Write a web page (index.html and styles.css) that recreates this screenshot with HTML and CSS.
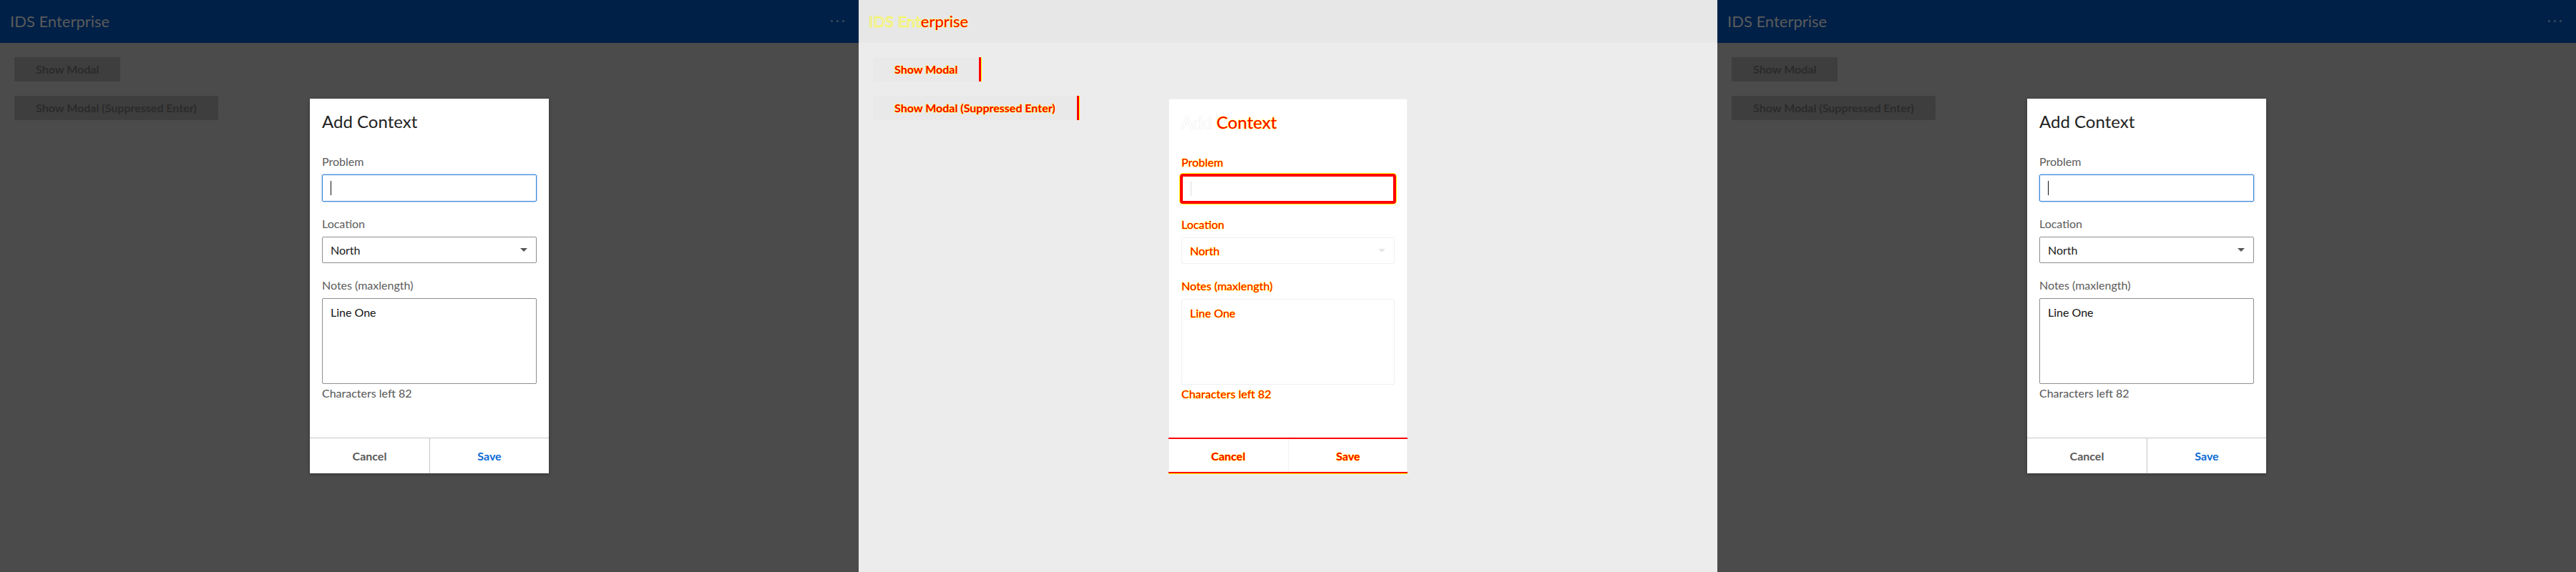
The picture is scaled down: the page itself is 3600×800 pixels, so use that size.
FILE: index.html
```html
<!DOCTYPE html>
<html lang="en">
<head>
<meta charset="utf-8">
<title>IDS Enterprise – Modal</title>
<link rel="stylesheet" href="styles.css">
</head>
<body>
  <!-- Left: actual -->
  <section class="panel panel-dim">
    <header class="hdr">
      <span class="hdr-title">IDS Enterprise</span>
      <span class="dots"><i></i><i></i><i></i></span>
    </header>
    <div class="content">
      <button class="btn">Show Modal</button>
      <button class="btn">Show Modal (Suppressed Enter)</button>
    </div>
    <div class="modal">
      <div class="modal-body">
        <h2 class="modal-title">Add Context</h2>
        <div class="field">
          <label class="lbl">Problem</label>
          <div class="input input-focus"><span class="caret"></span></div>
        </div>
        <div class="field">
          <label class="lbl">Location</label>
          <div class="input select"><span>North</span><svg class="arrow" width="10" height="5" viewBox="0 0 10 5"><path d="M0 0h10L5 5z"/></svg></div>
        </div>
        <div class="field field-last">
          <label class="lbl">Notes (maxlength)</label>
          <div class="input textarea">Line One</div>
        </div>
        <div class="counter">Characters left 82</div>
      </div>
      <div class="modal-foot">
        <button class="fbtn">Cancel</button>
        <button class="fbtn fbtn-primary">Save</button>
      </div>
    </div>
  </section>

  <!-- Middle: diff -->
  <section class="panel panel-diff">
    <header class="hdr">
      <span class="hdr-title"><span class="ghost">IDS Ent</span>erprise</span>
    </header>
    <div class="content">
      <button class="btn">Show Modal</button>
      <button class="btn">Show Modal (Suppressed Enter)</button>
    </div>
    <div class="modal">
      <div class="modal-body">
        <h2 class="modal-title"><span class="faint">Add</span> Context</h2>
        <div class="field">
          <label class="lbl">Problem</label>
          <div class="input input-focus"><span class="caret"></span></div>
        </div>
        <div class="field">
          <label class="lbl">Location</label>
          <div class="input select"><span>North</span><svg class="arrow" width="10" height="5" viewBox="0 0 10 5"><path d="M0 0h10L5 5z"/></svg></div>
        </div>
        <div class="field field-last">
          <label class="lbl">Notes (maxlength)</label>
          <div class="input textarea">Line One</div>
        </div>
        <div class="counter">Characters left 82</div>
      </div>
      <div class="modal-foot">
        <button class="fbtn">Cancel</button>
        <button class="fbtn fbtn-primary">Save</button>
      </div>
    </div>
  </section>

  <!-- Right: expected -->
  <section class="panel panel-dim">
    <header class="hdr">
      <span class="hdr-title">IDS Enterprise</span>
      <span class="dots"><i></i><i></i><i></i></span>
    </header>
    <div class="content">
      <button class="btn">Show Modal</button>
      <button class="btn">Show Modal (Suppressed Enter)</button>
    </div>
    <div class="modal">
      <div class="modal-body">
        <h2 class="modal-title">Add Context</h2>
        <div class="field">
          <label class="lbl">Problem</label>
          <div class="input input-focus"><span class="caret"></span></div>
        </div>
        <div class="field">
          <label class="lbl">Location</label>
          <div class="input select"><span>North</span><svg class="arrow" width="10" height="5" viewBox="0 0 10 5"><path d="M0 0h10L5 5z"/></svg></div>
        </div>
        <div class="field field-last">
          <label class="lbl">Notes (maxlength)</label>
          <div class="input textarea">Line One</div>
        </div>
        <div class="counter">Characters left 82</div>
      </div>
      <div class="modal-foot">
        <button class="fbtn">Cancel</button>
        <button class="fbtn fbtn-primary">Save</button>
      </div>
    </div>
  </section>
</body>
</html>
```

FILE: styles.css
```css
* { box-sizing: border-box; }

html, body {
  margin: 0;
  padding: 0;
}

body {
  display: flex;
  width: 3600px;
  height: 800px;
  overflow: hidden;
  font-family: Lato, "Noto Sans", "Liberation Sans", sans-serif;
  font-size: 16px;
}

.panel {
  position: relative;
  width: 1200px;
  height: 800px;
  flex: none;
  display: flex;
  flex-direction: column;
  overflow: hidden;
}

/* ---------- header ---------- */
.hdr {
  height: 60px;
  flex: none;
  display: flex;
  align-items: center;
  justify-content: space-between;
  padding: 0 20px 0 14px;
}

.hdr-title {
  font-size: 22px;
  line-height: 28px;
}

.dots {
  display: flex;
  gap: 5px;
  margin-top: -2px;
}

.dots i {
  display: block;
  width: 3px;
  height: 3px;
  border-radius: 50%;
}

/* ---------- page content ---------- */
.content {
  flex: 1;
  padding: 20px;
  display: flex;
  flex-direction: column;
  align-items: flex-start;
  gap: 20px;
}

.btn {
  height: 34px;
  padding: 0 30px;
  border: 0;
  border-radius: 2px;
  font-family: inherit;
  font-size: 16px;
  font-weight: 700;
  line-height: 20px;
  white-space: nowrap;
}

/* ---------- modal ---------- */
.modal {
  position: absolute;
  left: 50%;
  top: 50%;
  width: 334px;
  height: 524px;
  transform: translate(-50%, -50%);
  background: #fff;
  display: flex;
  flex-direction: column;
}

.modal-body {
  flex: 1;
  padding: 16px 17px 0;
}

.modal-title {
  margin: 0 0 30px;
  font-size: 24px;
  font-weight: 400;
  line-height: 32px;
}

.field {
  margin-bottom: 21px;
}

.field-last {
  margin-bottom: 3px;
}

.lbl {
  display: block;
  font-size: 16px;
  line-height: 20px;
  margin-bottom: 8px;
}

.input {
  height: 37px;
  border: 1px solid;
  border-radius: 2px;
  padding: 0 11px;
  display: flex;
  align-items: center;
  font-size: 16px;
}

.input-focus {
  height: 38px;
}

.caret {
  display: block;
  width: 1px;
  height: 20px;
}

.select {
  justify-content: space-between;
  padding-right: 12px;
}

.textarea {
  height: 120px;
  align-items: flex-start;
  padding-top: 9px;
  line-height: 20px;
}

.counter {
  font-size: 16px;
  line-height: 20px;
}

.modal-foot {
  flex: none;
  height: 50px;
  display: grid;
  grid-template-columns: 1fr 1fr;
  border-top: 1px solid;
}

.fbtn {
  border: 0;
  background: transparent;
  font-family: inherit;
  font-size: 16px;
  font-weight: 700;
  padding: 0;
}

.fbtn + .fbtn {
  border-left: 1px solid;
}

/* ---------- dimmed (actual / expected) ---------- */
.panel-dim { background: #4b4b4b; }
.panel-dim .hdr { background: #002047; }
.panel-dim .hdr-title { color: #5b5b5b; }
.panel-dim .dots i { background: #3d4b5c; }
.panel-dim .btn { background: #3e3e3e; color: #2b2b2b; }
.panel-dim .modal { box-shadow: 0 1px 4px rgba(0, 0, 0, 0.35); }
.panel-dim .modal-title { color: #222; }
.panel-dim .lbl { color: #5c5c5c; }
.panel-dim .input { border-color: #8e8e8e; color: #1b1b1b; }
.panel-dim .input-focus { border-color: #2f7fd6; box-shadow: 0 0 3px rgba(47, 127, 214, 0.55); }
.panel-dim .caret { background: #111; }
.panel-dim .arrow { fill: #555; }
.panel-dim .textarea { color: #111; }
.panel-dim .counter { color: #555; }
.panel-dim .modal-foot { border-color: #c6c6c6; }
.panel-dim .fbtn { color: #5a5a5a; }
.panel-dim .fbtn + .fbtn { border-color: #c6c6c6; }
.panel-dim .fbtn-primary { color: #0a6bd4; }

/* ---------- diff ---------- */
.panel-diff { background: #ececec; }
.panel-diff .hdr { background: #e7e7e7; }

.panel-diff .hdr-title,
.panel-diff .btn,
.panel-diff .modal-title,
.panel-diff .lbl,
.panel-diff .input,
.panel-diff .counter,
.panel-diff .fbtn {
  color: #f00;
  -webkit-text-stroke: 1px #ff0;
  paint-order: stroke fill;
}

.panel-diff .ghost {
  color: transparent;
  -webkit-text-stroke: 0.7px #ff0;
}

.panel-diff .faint {
  color: #fff;
  -webkit-text-stroke: 0.7px #e2e2e2;
}

.panel-diff .btn {
  background: #e9e9e9;
  border-radius: 0;
  border-right: 3px solid #f00;
  box-shadow: 1px 0 0 #ff0;
}

.panel-diff .modal { border: 1px solid #f0f0f0; }
.panel-diff .input { border-color: #efefef; }
.panel-diff .input-focus {
  border: 4px solid #f00;
  border-radius: 4px;
  box-shadow: 0 0 0 1px #ff0;
  margin: 0 -2px;
  height: 42px;
  transform: translateY(-2px);
  margin-bottom: -4px;
}
.panel-diff .caret { background: #ddd; }
.panel-diff .arrow { fill: #e6e6e6; }
.panel-diff .modal-foot {
  border-top: 2px solid #f00;
  border-bottom: 2px solid #f00;
  box-shadow: 0 1px 0 #ff0;
  margin: 0 -1px -1px;
}
.panel-diff .fbtn + .fbtn { border-color: #f2f2f2; }
```
